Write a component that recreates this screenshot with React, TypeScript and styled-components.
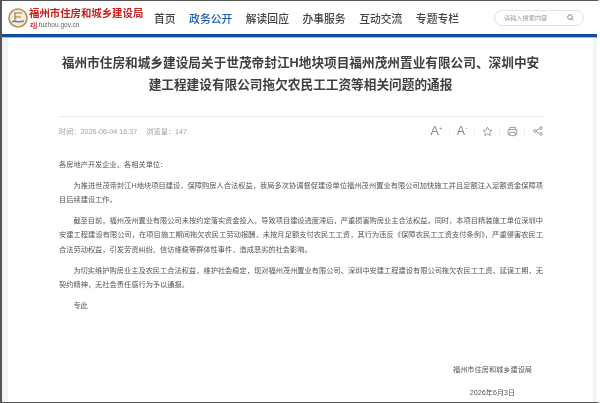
import styled, { createGlobalStyle } from "styled-components";

const GlobalStyle = createGlobalStyle`
  html, body {
    margin: 0;
    padding: 0;
    background: #fff;
  }
  body {
    font-family: "Liberation Sans", "Noto Sans CJK SC", sans-serif;
  }
`;

const navItems = ["首页", "政务公开", "解读回应", "办事服务", "互动交流", "专题专栏"];

export default function App() {
  return (
    <>
      <GlobalStyle />
      <Frame>
        <Header>
          <Logo>
            <svg width="20" height="20" viewBox="0 0 20 20">
              <circle cx="10" cy="10" r="9" fill="#f6ecd9" stroke="#bd9258" strokeWidth="1.7" />
              <path d="M6 5h8M7 5v8M7 9h6" stroke="#a9713a" strokeWidth="1.1" fill="none" />
              <path d="M4 14c3-2 5 1 12-1" stroke="#3f8fc4" strokeWidth="1.5" fill="none" />
            </svg>
            <LogoText>
              <LogoTitle>福州市住房和城乡建设局</LogoTitle>
              <LogoUrl>
                <b>zjj</b>.fuzhou.gov.cn
              </LogoUrl>
            </LogoText>
          </Logo>
          <Nav>
            {navItems.map((item) => (
              <NavItem key={item} $active={item === "政务公开"}>
                {item}
              </NavItem>
            ))}
          </Nav>
          <Search>
            <span>请输入搜索内容</span>
            <svg width="7" height="7" viewBox="0 0 12 12" fill="none" stroke="#666" strokeWidth="1.3">
              <circle cx="5.2" cy="5.2" r="4" />
              <path d="M8.2 8.2L11 11" />
            </svg>
          </Search>
        </Header>
        <Body>
          <Main>
            <Title>
              福州市住房和城乡建设局关于世茂帝封江H地块项目福州茂州置业有限公司、深圳中安建工程建设有限公司拖欠农民工工资等相关问题的通报
            </Title>
            <MetaRow>
              <Meta>
                <span>时间&#xFF1A;2026-06-04 16:37</span>
                <span>浏览量&#xFF1A;147</span>
              </Meta>
              <Tools>
                <Tool>
                  A<sup>+</sup>
                </Tool>
                <Tool>
                  A<sup>-</sup>
                </Tool>
                <Tool>
                  <svg width="11" height="11" viewBox="0 0 24 24" fill="none" stroke="#888" strokeWidth="1.7" strokeLinejoin="round">
                    <path d="M12 2.5l2.9 6.2 6.8.8-5 4.6 1.3 6.7-6-3.4-6 3.4 1.3-6.7-5-4.6 6.8-.8z" />
                  </svg>
                </Tool>
                <Tool>
                  <svg width="11" height="11" viewBox="0 0 24 24" fill="none" stroke="#888" strokeWidth="1.8">
                    <path d="M6 8V3h12v5M6 18H2.5V8h19v10H18" />
                    <path d="M6 14h12v7H6z" />
                  </svg>
                </Tool>
                <Tool>
                  <svg width="10" height="10" viewBox="0 0 24 24" fill="none" stroke="#888" strokeWidth="2">
                    <circle cx="5" cy="12" r="3.2" />
                    <circle cx="19" cy="5" r="3.2" />
                    <circle cx="19" cy="19" r="3.2" />
                    <path d="M8 10.5l8-4M8 13.5l8 4" />
                  </svg>
                </Tool>
              </Tools>
            </MetaRow>
            <Content>
              <Salutation>各房地产开发企业、各相关单位&#xFF1A;</Salutation>
              <Paragraph>
                为推进世茂帝封江H地块项目建设&#xFF0C;保障购房人合法权益&#xFF0C;我局多次协调督促建设单位福州茂州置业有限公司加快施工并且足额注入足额资金保障项目后续建设工作&#x3002;
              </Paragraph>
              <Paragraph>
                截至目前&#xFF0C;福州茂州置业有限公司未按约定落实资金投入&#xFF0C;导致项目建设进度滞后&#xFF0C;严重损害购房业主合法权益&#x3002;同时&#xFF0C;本项目精装施工单位深圳中安建工程建设有限公司&#xFF0C;在项目施工期间拖欠农民工劳动报酬&#xFF0C;未按月足额支付农民工工资&#xFF0C;其行为违反《保障农民工工资支付条例》&#xFF0C;严重侵害农民工合法劳动权益&#xFF0C;引发劳资纠纷、信访维稳等群体性事件&#xFF0C;造成恶劣的社会影响&#x3002;
              </Paragraph>
              <Paragraph>
                为切实维护购房业主及农民工合法权益&#xFF0C;维护社会稳定&#xFF0C;现对福州茂州置业有限公司、深圳中安建工程建设有限公司拖欠农民工工资、延误工期&#xFF0C;无契约精神&#xFF0C;无社会责任感行为予以通报&#x3002;
              </Paragraph>
              <Paragraph>专此</Paragraph>
            </Content>
            <Signature>
              <div>福州市住房和城乡建设局</div>
              <div>2026年6月3日</div>
            </Signature>
          </Main>
        </Body>
      </Frame>
    </>
  );
}

const Frame = styled.div`
  box-sizing: border-box;
  width: 600px;
  height: 403px;
  overflow: hidden;
  display: flex;
  flex-direction: column;
  border-top: 1px solid #555;
  border-bottom: 1px solid #555;
  border-left: 2px solid #555;
  border-right: 3px solid #fff;
  background: #fff;
  filter: blur(0.3px);
`;

const Header = styled.header`
  flex: none;
  box-sizing: border-box;
  height: 36px;
  display: flex;
  align-items: center;
  padding: 0 13px 0 6px;
  border-bottom: 3px solid #0f4f9a;
  box-shadow: 0 1px 0 #9cc0e4;
`;

const Logo = styled.div`
  width: 146px;
  display: flex;
  align-items: center;
  gap: 1px;
`;

const LogoText = styled.div`
  display: flex;
  flex-direction: column;
  gap: 2px;
`;

const LogoTitle = styled.div`
  font-family: "Liberation Serif", "Noto Sans CJK SC", serif;
  font-size: 10.4px;
  font-weight: 700;
  line-height: 11px;
  color: #c81f1f;
  white-space: nowrap;
`;

const LogoUrl = styled.div`
  font-size: 6.6px;
  line-height: 7px;
  color: #666;
  padding-left: 1px;
  b {
    color: #c81f1f;
  }
`;

const Nav = styled.nav`
  display: flex;
  gap: 13.5px;
`;

const NavItem = styled.a<{ $active?: boolean }>`
  font-size: 10.8px;
  font-weight: 500;
  color: ${(p) => (p.$active ? "#1d5ea8" : "#444")};
`;

const Search = styled.div`
  box-sizing: border-box;
  margin-left: auto;
  width: 90px;
  height: 16px;
  display: flex;
  align-items: center;
  justify-content: space-between;
  padding: 0 9px;
  border: 1px solid #e2e2e2;
  border-radius: 8px;
  font-size: 6.2px;
  color: #999;
`;

const Body = styled.div`
  flex: 1;
  margin-top: 1px;
  padding: 0 4px 0 6px;
  background: #f5f5f5;
  display: flex;
  min-height: 0;
`;

const Main = styled.main`
  flex: 1;
  background: #fff;
  padding: 15px 50px 0 51px;
`;

const Title = styled.h1`
  margin: 0;
  padding: 0 1px 20px 0;
  border-bottom: 1px solid #eaeaea;
  font-size: 12.66px;
  line-height: 21.5px;
  font-weight: 700;
  color: #404040;
  text-align: center;
`;

const MetaRow = styled.div`
  display: flex;
  justify-content: space-between;
  align-items: center;
  padding-top: 9px;
`;

const Meta = styled.div`
  display: flex;
  gap: 9px;
  font-size: 7.2px;
  color: #a0a0a0;
`;

const Tools = styled.div`
  display: flex;
  align-items: center;
`;

const Tool = styled.div`
  box-sizing: border-box;
  width: 25px;
  height: 8px;
  display: flex;
  align-items: center;
  justify-content: center;
  border-left: 1px solid #eee;
  font-size: 12.5px;
  font-weight: 300;
  color: #888;
  &:first-child {
    border-left: none;
  }
  &:last-child {
    width: 19px;
    justify-content: flex-end;
  }
  sup {
    font-size: 6px;
    line-height: 0;
    margin-top: -6px;
  }
`;

const Content = styled.div`
  padding-top: 22px;
  font-size: 7.22px;
  line-height: 14.6px;
  color: #555;
`;

const Salutation = styled.p`
  margin: 0 0 6px;
`;

const Paragraph = styled.p`
  margin: 0 0 6px;
  text-indent: 14.4px;
  text-align: justify;
`;

const Signature = styled.div`
  width: 80px;
  margin: 50px 10.5px 0 auto;
  display: flex;
  flex-direction: column;
  gap: 8px;
  font-size: 7.2px;
  line-height: 14.6px;
  color: #555;
  text-align: center;
  white-space: nowrap;
`;
